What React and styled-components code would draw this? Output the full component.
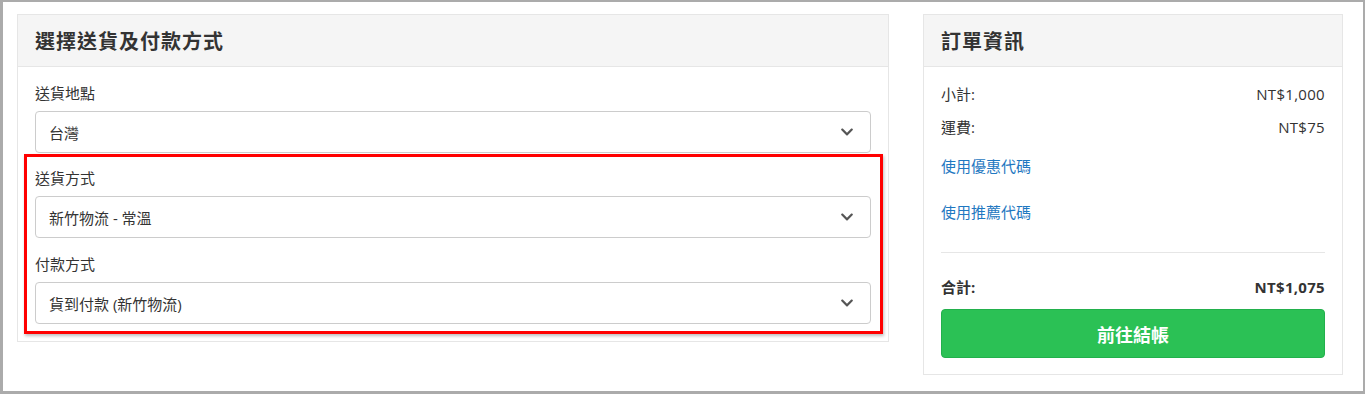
import React from "react";
import styled, { createGlobalStyle } from "styled-components";
import { FaChevronDown } from "react-icons/fa";

const Global = createGlobalStyle`
  html, body { margin: 0; padding: 0; background: #fff; }
  body {
    font-family: "Open Sans", "Noto Sans CJK TC", sans-serif;
    color: #333;
    font-size: 15px;
  }
  * { box-sizing: border-box; }
`;

const Frame = styled.div`
  width: 1365px;
  height: 394px;
  border-style: solid;
  border-color: #ababab;
  border-width: 2px 2px 3px 3px;
  padding: 12px 20px 0 14px;
  display: flex;
  align-items: flex-start;
  gap: 34px;
  background: #fff;
`;

const Panel = styled.section`
  width: ${(p) => p.$width}px;
  flex: none;
  border: 1px solid #e6e6e6;
  background: #fff;
`;

const PanelHeader = styled.header`
  height: 52px;
  background: #f5f5f5;
  border-bottom: 1px solid #e6e6e6;
  display: flex;
  align-items: center;
  padding: 0 17px;
`;

const Title = styled.h2`
  margin: 0;
  font-size: 20px;
  line-height: 1;
  font-weight: 700;
  color: #333;
  letter-spacing: 1px;
  font-family: "Noto Sans CJK TC", sans-serif;
`;

const FormBody = styled.div`
  padding: 16px 17px 17px;
`;

const Highlight = styled.div`
  position: relative;
`;

const RedBox = styled.div`
  position: absolute;
  left: -11px;
  right: -12px;
  top: -14px;
  bottom: -10px;
  border: 3px solid #ff0000;
  box-shadow: 1px 2px 3px rgba(0, 0, 0, 0.25);
  pointer-events: none;
`;

const Field = styled.div`
  margin-top: ${(p) => (p.$first ? 0 : p.$gap || 15)}px;
`;

const Label = styled.div`
  font-size: 15px;
  line-height: 20px;
  color: #333;
  margin-bottom: 8px;
  font-family: "Noto Sans CJK TC", sans-serif;
`;

const Select = styled.div`
  height: 42px;
  border: 1px solid #cccccc;
  border-radius: 4px;
  display: flex;
  align-items: center;
  justify-content: space-between;
  padding: 0 16px 0 13px;
  font-size: 15px;
  color: #333;
  background: #fff;
`;

const Chevron = styled(FaChevronDown)`
  color: #555;
  width: 14px;
  height: 14px;
`;

const SummaryBody = styled.div`
  padding: 17px 17px 16px;
`;

const Row = styled.div`
  display: flex;
  justify-content: space-between;
  line-height: 20px;
  font-size: 15px;
  font-weight: ${(p) => (p.$bold ? 700 : 400)};
  margin-bottom: ${(p) => p.$mb || 0}px;
  color: #333;
`;

const Amount = styled.span`
  letter-spacing: 0.3px;
`;

const Link = styled.a`
  display: block;
  color: #1f78c1;
  line-height: 20px;
  font-size: 15px;
  text-decoration: none;
  margin-bottom: ${(p) => p.$mb || 0}px;
  font-family: "Noto Sans CJK TC", sans-serif;
`;

const Divider = styled.hr`
  border: none;
  border-top: 1px solid #e6e6e6;
  margin: 0 0 24px;
`;

const CheckoutButton = styled.button`
  width: 100%;
  height: 49px;
  border: 1px solid #22b04c;
  border-radius: 4px;
  background: #2bc155;
  color: #fff;
  font-size: 18px;
  font-weight: 700;
  font-family: "Noto Sans CJK TC", sans-serif;
  cursor: pointer;
`;

function SelectField({ label, value, first, gap }) {
  return (
    <Field $first={first} $gap={gap}>
      <Label>{label}</Label>
      <Select>
        <span>{value}</span>
        <Chevron />
      </Select>
    </Field>
  );
}

export default function App() {
  return (
    <>
      <Global />
      <Frame>
        <Panel $width={872}>
          <PanelHeader>
            <Title>選擇送貨及付款方式</Title>
          </PanelHeader>
          <FormBody>
            <SelectField first label="送貨地點" value="台灣" />
            <Field $gap={15}>
              <Highlight>
                <SelectField first label="送貨方式" value="新竹物流 - 常溫" />
                <SelectField gap={16} label="付款方式" value="貨到付款 (新竹物流)" />
                <RedBox />
              </Highlight>
            </Field>
          </FormBody>
        </Panel>
        <Panel $width={420}>
          <PanelHeader>
            <Title>訂單資訊</Title>
          </PanelHeader>
          <SummaryBody>
            <Row $mb={13}>
              <span>小計:</span>
              <Amount>NT$1,000</Amount>
            </Row>
            <Row $mb={19}>
              <span>運費:</span>
              <Amount>NT$75</Amount>
            </Row>
            <Link href="#" $mb={26}>使用優惠代碼</Link>
            <Link href="#" $mb={30}>使用推薦代碼</Link>
            <Divider />
            <Row $bold $mb={12}>
              <span>合計:</span>
              <Amount>NT$1,075</Amount>
            </Row>
            <CheckoutButton>前往結帳</CheckoutButton>
          </SummaryBody>
        </Panel>
      </Frame>
    </>
  );
}
